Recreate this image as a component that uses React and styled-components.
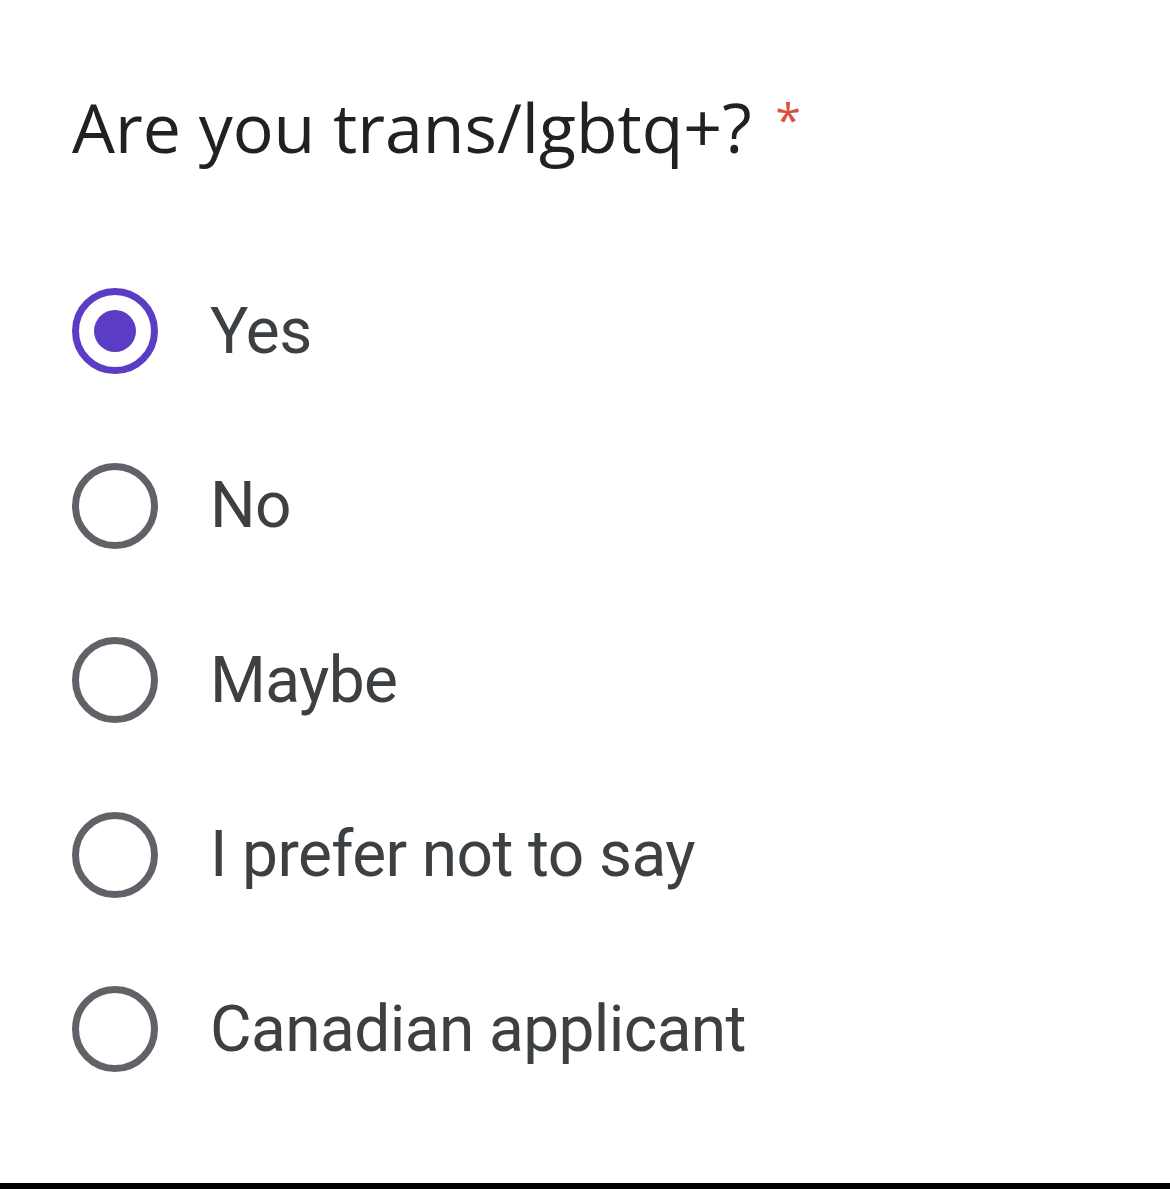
import styled, { createGlobalStyle } from "styled-components";

const GlobalStyle = createGlobalStyle`
    html, body {
        margin: 0;
        padding: 0;
        background: #ffffff;
    }
`;

const options = ["Yes", "No", "Maybe", "I prefer not to say", "Canadian applicant"];

const App = () => {
    const selected = 0;
    return (
        <>
            <GlobalStyle />
            <Page>
                <Question>
                    <Title>
                        Are you trans/lgbtq+?
                        <Required>*</Required>
                    </Title>
                    <OptionList>
                        {options.map((label, index) => (
                            <Option key={label}>
                                <Radio checked={index === selected} />
                                <Label>{label}</Label>
                            </Option>
                        ))}
                    </OptionList>
                </Question>
                <BottomBar />
            </Page>
        </>
    );
};

export default App;

const Page = styled.div`
    display: flex;
    flex-direction: column;
    height: 1189px;
    box-sizing: border-box;
    overflow: hidden;
`,
Question = styled.div`
    flex: 1;
    display: flex;
    flex-direction: column;
    padding: 77px 0 0 72px;
`,
Title = styled.div`
    font-family: "Open Sans", "Liberation Sans", sans-serif;
    font-size: 68px;
    line-height: 84px;
    color: #202124;
    letter-spacing: 0;
`,
Required = styled.span`
    color: #d9503f;
    font-size: 46px;
    margin-left: 24px;
    vertical-align: 16px;
`,
OptionList = styled.div`
    display: flex;
    flex-direction: column;
    gap: 88.5px;
    margin-top: 119px;
`,
Option = styled.div`
    display: flex;
    align-items: center;
    gap: 52px;
    height: 86px;
`,
Radio = styled.span`
    position: relative;
    flex: none;
    width: 86px;
    height: 86px;
    box-sizing: border-box;
    border-radius: 50%;
    border: 7px solid ${({checked}) => checked ? '#5b3cc4' : '#5f6368'};
    &::after {
        content: "";
        display: ${({checked}) => checked ? 'block' : 'none'};
        position: absolute;
        left: 50%;
        top: 50%;
        width: 42px;
        height: 42px;
        margin: -21px 0 0 -21px;
        border-radius: 50%;
        background: #5b3cc4;
    }
`,
Label = styled.span`
    font-family: Roboto, "Liberation Sans", sans-serif;
    font-size: 64px;
    color: #3c4043;
    letter-spacing: -0.6px;
`,
BottomBar = styled.div`
    height: 6px;
    background: #000;
`;
